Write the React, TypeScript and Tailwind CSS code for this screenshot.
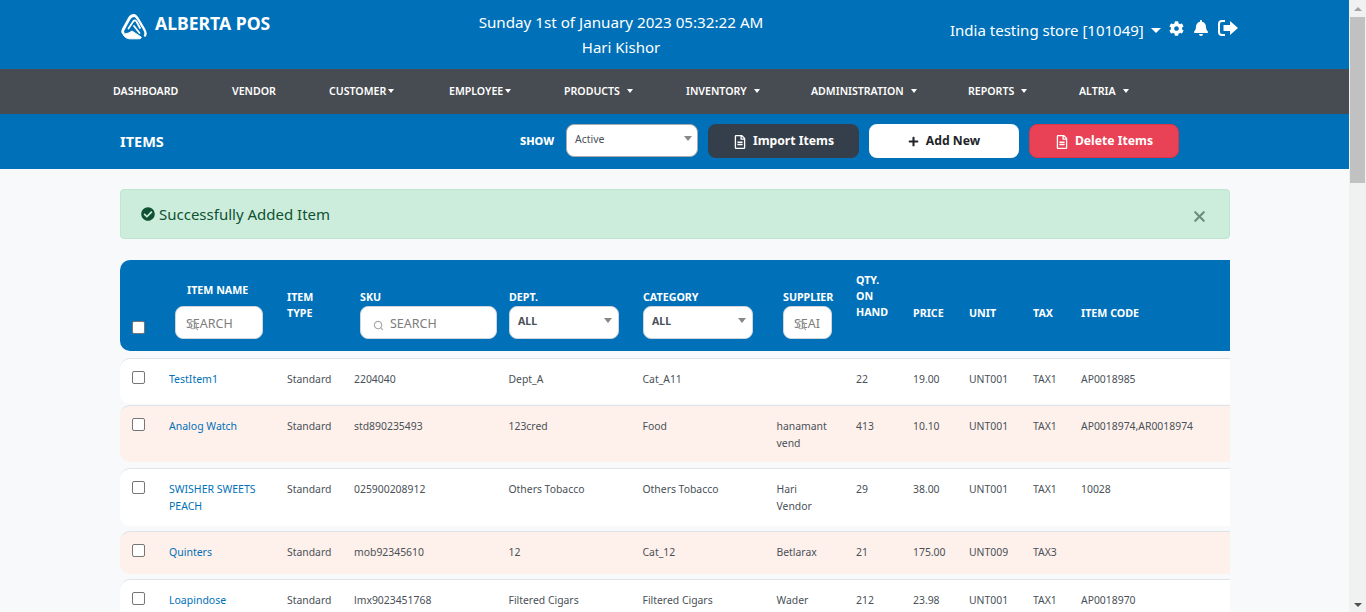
import { useState } from "react";
import { Search, X } from "lucide-react";
import {
  FaCheckCircle,
  FaCog,
  FaBell,
  FaRegFileAlt,
  FaPlus,
} from "react-icons/fa";

const NAV = [
  { label: "DASHBOARD", w: "w-[119px]" },
  { label: "VENDOR", w: "w-[97px]" },
  { label: "CUSTOMER", caret: true, tight: true, w: "w-[120px]" },
  { label: "EMPLOYEE", caret: true, tight: true, w: "w-[115px]" },
  { label: "PRODUCTS", caret: true, w: "w-[122px]" },
  { label: "INVENTORY", caret: true, w: "w-[125px]" },
  { label: "ADMINISTRATION", caret: true, w: "w-[157px]" },
  { label: "REPORTS", caret: true, w: "w-[111px]" },
  { label: "ALTRIA", caret: true, w: "w-[60px]" },
];

const ROWS = [
  { name: ["TestItem1"], sku: "2204040", dept: "Dept_A", cat: "Cat_A11", sup: [], qty: "22", price: "19.00", unit: "UNT001", tax: "TAX1", code: "AP0018985", h: "h-[46px]", mt: "mt-[7px]", pink: false },
  { name: ["Analog Watch"], sku: "std890235493", dept: "123cred", cat: "Food", sup: ["hanamant", "vend"], qty: "413", price: "10.10", unit: "UNT001", tax: "TAX1", code: "AP0018974,AR0018974", h: "h-[57px]", mt: "mt-[1px]", pink: true },
  { name: ["SWISHER SWEETS", "PEACH"], sku: "025900208912", dept: "Others Tobacco", cat: "Others Tobacco", sup: ["Hari", "Vendor"], qty: "29", price: "38.00", unit: "UNT001", tax: "TAX1", code: "10028", h: "h-[58px]", mt: "mt-[6px]", pink: false },
  { name: ["Quinters"], sku: "mob92345610", dept: "12", cat: "Cat_12", sup: ["Betlarax"], qty: "21", price: "175.00", unit: "UNT009", tax: "TAX3", code: "", h: "h-[43px]", mt: "mt-[5px]", pink: true },
  { name: ["Loapindose"], sku: "lmx9023451768", dept: "Filtered Cigars", cat: "Filtered Cigars", sup: ["Wader"], qty: "212", price: "23.98", unit: "UNT001", tax: "TAX1", code: "AP0018970", h: "h-[46px]", mt: "mt-[5px]", pink: false },
];

function Caret({ className = "" }: { className?: string }) {
  return (
    <span
      className={`inline-block w-0 h-0 border-x-[3.5px] border-x-transparent border-t-[4px] border-t-white ${className}`}
    />
  );
}

// three interlocked bands forming a rounded triangle
function Logo() {
  return (
    <svg viewBox="0 0 26 26" className="w-[26px] h-[26px] mt-[3px]" fill="none" stroke="#fff" strokeLinecap="round" strokeLinejoin="round">
      <path d="M13 1.5 C10 1.5 9 3 8 5 L2.5 15 C1.5 17 1.5 18 2 18.5" strokeWidth="2.8" />
      <path d="M13.5 1.5 C15 2 16 3.5 17 5 L23 15 C25 18.5 25 20 24 21.5" strokeWidth="2.4" />
      <path d="M1.5 19 C4 21 8 19 11 17 L20 23 C21 24.5 19 24.8 17 24.8 L9 24.8 C5 24.8 2.5 22 1.5 19 Z" fill="#fff" strokeWidth="1" />
      <path d="M7.5 14.5 L12.5 7 C13.5 6 14.5 6 15.5 7.5 L19 14" strokeWidth="1.8" />
      <path d="M13 12 L18.5 19" strokeWidth="1.8" />
    </svg>
  );
}

function SignOutIcon() {
  return (
    <svg viewBox="0 0 20 16" className="w-[20px] h-[16px] ml-[9px] mt-[2px]">
      <path d="M7 1 H4 C2.3 1 1 2.3 1 4 V12 C1 13.7 2.3 15 4 15 H7" fill="none" stroke="#fff" strokeWidth="2" />
      <path d="M12 1 L20 8 L12 15 V11 H5.5 V5 H12 Z" fill="#fff" />
    </svg>
  );
}

function SearchBox({ w, text, icon }: { w: string; text: string; icon: "over" | "left" }) {
  return (
    <div className={`relative ${w} h-[33px] bg-white rounded-lg border border-[#ced4da] flex items-center overflow-hidden`}>
      <span className={`text-[12.5px] mt-[3px] text-[#7d7d7d] ${icon === "left" ? "pl-[29px]" : "pl-[10px]"}`}>{text}</span>
      <Search size={11} strokeWidth={2.5} className="absolute text-[#a8a8a8] top-[13px] left-[12px]" />
    </div>
  );
}

function DeptSelect({ w }: { w: string }) {
  return (
    <div className={`relative ${w} h-[33px] bg-white rounded-lg border border-[#ced4da] pl-[8px] pt-[7px] text-[10.5px] font-bold text-[#495057]`}>
      ALL
      <span className="absolute right-[6px] top-[11px] w-0 h-0 border-x-[4px] border-x-transparent border-t-[5px] border-t-[#888]" />
    </div>
  );
}

const headCls = "text-[10.7px] font-bold text-white leading-[16px]";

export default function App() {
  const [show] = useState("Active");

  return (
    <div className="flex h-[612px] overflow-hidden bg-[#f8f9fa] font-['Noto_Sans',sans-serif]">
      <div className="flex-1 min-w-0 overflow-hidden">
        {/* top bar */}
        <header className="h-[69px] bg-[#0071b9] text-white flex">
          <div className="w-[430px] pl-[121px] pt-[11px] flex items-start gap-[8px]">
            <Logo />
            <span className="text-[17.6px] font-bold leading-[24px]">ALBERTA POS</span>
          </div>
          <div className="w-[382px] pt-[10px] text-center text-[15px] leading-[25px]">
            <div className="text-[15.2px]">Sunday 1st of January 2023 05:32:22 AM</div>
            <div>Hari Kishor</div>
          </div>
          <div className="flex-1 pl-[138px] pt-[18px] flex items-start">
            <span className="text-[15px] leading-[25px]">India testing store [101049]</span>
            <Caret className="ml-[7px] mt-[10px] border-x-[5px] border-t-[5px]" />
            <FaCog className="ml-[8px] mt-[3px]" size={15} />
            <FaBell className="ml-[9px] mt-[2px]" size={16} />
            <SignOutIcon />
          </div>
        </header>

        {/* main menu */}
        <nav className="h-[45px] bg-[#474c52] flex items-center pl-[113px]">
          {NAV.map((n) => (
            <div key={n.label} className={`${n.w} shrink-0 flex items-center text-[10.6px] font-semibold text-white`}>
              {n.label}
              {n.caret && <Caret className={n.tight ? "ml-[2px]" : "ml-[7px]"} />}
            </div>
          ))}
        </nav>

        {/* page heading */}
        <div className="h-[55px] bg-[#0071b9] flex items-center pl-[120px]">
          <div className="w-[400px] text-[14.5px] font-bold text-white">ITEMS</div>
          <div className="w-[46px] text-[11px] font-extrabold text-white">SHOW</div>
          <div className="relative w-[132px] h-[33px] -mt-[2px] bg-white rounded-lg border border-[#aaa] pl-[8px] pt-[7px] text-[10.5px] text-[#495057]">
            {show}
            <span className="absolute right-[5px] top-[11px] w-0 h-0 border-x-[4px] border-x-transparent border-t-[5px] border-t-[#888]" />
          </div>
          <button className="ml-[10px] -mt-[1px] pt-[1px] w-[151px] h-[34px] rounded-lg bg-[#343f4b] text-white text-[12.2px] font-bold flex items-center justify-center gap-[6px]">
            <FaRegFileAlt size={14} /> Import Items
          </button>
          <button className="ml-[10px] -mt-[1px] pt-[1px] w-[150px] h-[34px] rounded-lg bg-white text-[#212529] text-[12.2px] font-bold flex items-center justify-center gap-[7px]">
            <FaPlus size={11} /> Add New
          </button>
          <button className="ml-[10px] -mt-[1px] pt-[1px] w-[150px] h-[34px] rounded-lg bg-[#e94155] border border-[#dc3545] text-white text-[12.2px] font-bold flex items-center justify-center gap-[6px]">
            <FaRegFileAlt size={14} /> Delete Items
          </button>
        </div>

        {/* content */}
        <div className="pl-[120px] pr-[119px] pt-[20px] bg-[#f8f9fb]">
          <div className="h-[50px] bg-[#cdeddc] border border-[#bde5d0] rounded-[4px] flex items-center pl-[20px] pr-[21px] text-[#0f5132]">
            <FaCheckCircle size={14} />
            <span className="ml-[4px] text-[15px]">Successfully Added Item</span>
            <X size={17} strokeWidth={3} className="ml-auto mt-[5px] text-[#6f8a80]" />
          </div>

          {/* table head */}
          <div className="mt-[21px] h-[91px] bg-[#0071b9] rounded-l-[10px] flex">
            <div className="w-[55px] pl-[12px] pt-[61px] shrink-0">
              <span className="block w-[13px] h-[13px] bg-white border border-[#767676] rounded-[2px]" />
            </div>
            <div className="w-[112px] shrink-0 pt-[22px]">
              <div className={`${headCls} pl-[12px] mb-[8px]`}>ITEM NAME</div>
              <SearchBox w="w-[88px]" text="SEARCH" icon="over" />
            </div>
            <div className={`w-[73px] shrink-0 pt-[29px] ${headCls}`}>ITEM<br />TYPE</div>
            <div className="w-[149px] shrink-0 pt-[29px]">
              <div className={`${headCls} mb-[1px]`}>SKU</div>
              <SearchBox w="w-[137px]" text="SEARCH" icon="left" />
            </div>
            <div className="w-[134px] shrink-0 pt-[29px]">
              <div className={`${headCls} mb-[1px]`}>DEPT.</div>
              <DeptSelect w="w-[110px]" />
            </div>
            <div className="w-[140px] shrink-0 pt-[29px]">
              <div className={`${headCls} mb-[1px]`}>CATEGORY</div>
              <DeptSelect w="w-[110px]" />
            </div>
            <div className="w-[73px] shrink-0 pt-[29px]">
              <div className={`${headCls} mb-[1px]`}>SUPPLIER</div>
              <SearchBox w="w-[49px]" text="SEAI" icon="over" />
            </div>
            <div className={`w-[57px] shrink-0 pt-[12px] ${headCls}`}>QTY.<br />ON<br />HAND</div>
            <div className={`w-[56px] shrink-0 pt-[45px] ${headCls}`}>PRICE</div>
            <div className={`w-[64px] shrink-0 pt-[45px] ${headCls}`}>UNIT</div>
            <div className={`w-[48px] shrink-0 pt-[45px] ${headCls}`}>TAX</div>
            <div className={`flex-1 pt-[45px] ${headCls}`}>ITEM CODE</div>
          </div>

          {/* table rows */}
          {ROWS.map((r) => (
            <div
              key={r.sku}
              className={`${r.h} ${r.mt} ${r.pink ? "bg-[#fef0eb]" : "bg-white"} border-t border-[#dfe2e6] rounded-l-[10px] flex pt-[12px] text-[10.4px] leading-[17px] text-[#495057]`}
            >
              <div className="w-[49px] shrink-0 pl-[12px]">
                <span className="block w-[13px] h-[13px] bg-white border border-[#767676] rounded-[2px]" />
              </div>
              <div className="w-[118px] shrink-0 text-[#0071b9] text-[10.5px]">
                {r.name.map((l) => <div key={l}>{l}</div>)}
              </div>
              <div className="w-[67px] shrink-0">Standard</div>
              <div className="w-[154.5px] shrink-0">{r.sku}</div>
              <div className="w-[134px] shrink-0">{r.dept}</div>
              <div className="w-[134px] shrink-0">{r.cat}</div>
              <div className="w-[79.5px] shrink-0">
                {r.sup.map((l) => <div key={l}>{l}</div>)}
              </div>
              <div className="w-[57px] shrink-0">{r.qty}</div>
              <div className="w-[56px] shrink-0">{r.price}</div>
              <div className="w-[64px] shrink-0">{r.unit}</div>
              <div className="w-[48px] shrink-0">{r.tax}</div>
              <div className="flex-1 whitespace-nowrap">{r.code}</div>
            </div>
          ))}
        </div>
      </div>

      {/* page scrollbar */}
      <div className="w-[17px] shrink-0 bg-[#f1f1f1] flex flex-col items-center">
        <span className="mt-[7px] w-0 h-0 border-x-[4px] border-x-transparent border-b-[4px] border-b-[#a3a3a3]" />
        <div className="w-[15px] h-[166px] mt-[6px] bg-[#c1c1c1]" />
        <span className="mt-auto mb-[5px] w-0 h-0 border-x-[4px] border-x-transparent border-t-[4px] border-t-[#505050]" />
      </div>
    </div>
  );
}
